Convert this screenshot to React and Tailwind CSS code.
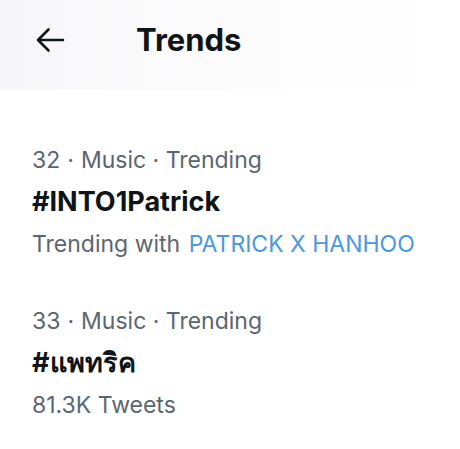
import React from "react";

const trends = [
	{
		rank: 32,
		title: "#INTO1Patrick",
		sub: (
			<>
				Trending with{" "}
				<span className="ml-[2px] text-[#4a98e2]">PATRICK X HANHOO</span>
			</>
		),
	},
	{ rank: 33, title: "#แพทริค", sub: "81.3K Tweets" },
];

function BackArrow() {
	return (
		<svg width="30" height="26" viewBox="0 0 30 26" fill="none">
			<path
				d="M28 13H3M13.5 2.5L3 13l10.5 10.5"
				stroke="#0f1419"
				strokeWidth="2.6"
				strokeLinecap="round"
				strokeLinejoin="round"
			/>
		</svg>
	);
}

function TrendItem({ rank, title, sub }) {
	return (
		<div className="px-8">
			<div className="h-[42px] text-[23px] leading-[42px] text-[#5b6670]">
				{rank}
				<span className="mx-[7px]">·</span>Music · Trending
			</div>
			<div className="h-[42px] text-[27px] leading-[42px] font-bold text-[#0f1419]">
				{title}
			</div>
			<div className="h-[42px] text-[23px] leading-[42px] text-[#5b6670]">
				{sub}
			</div>
		</div>
	);
}

export default function App() {
	return (
		<div
			className="w-[460px] h-[449px] bg-white overflow-hidden"
			style={{ fontFamily: "Inter, 'Noto Sans', sans-serif" }}
		>
			<div className="h-[90px] flex items-center bg-gradient-to-r from-[#f7f7f9] via-[#fcfcfd] to-white">
				<div className="w-[136px] pl-[35px] -mt-[10px]">
					<BackArrow />
				</div>
				<h1 className="-mt-[10px] text-[31px] font-bold text-[#0f1419]">
					Trends
				</h1>
			</div>
			<div className="pt-[49px] flex flex-col gap-[35px]">
				{trends.map((t) => (
					<TrendItem key={t.rank} {...t} />
				))}
			</div>
		</div>
	);
}
